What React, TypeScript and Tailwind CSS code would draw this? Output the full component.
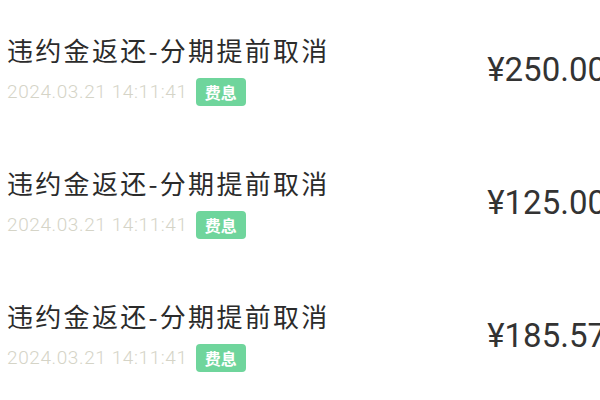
import React from "react"

type Record = {
  title: string
  time: string
  tag: string
  amount: string
}

const records: Record[] = [
  { title: "违约金返还-分期提前取消", time: "2024.03.21 14:11:41", tag: "费息", amount: "¥250.00" },
  { title: "违约金返还-分期提前取消", time: "2024.03.21 14:11:41", tag: "费息", amount: "¥125.00" },
  { title: "违约金返还-分期提前取消", time: "2024.03.21 14:11:41", tag: "费息", amount: "¥185.57" },
]

const Row: React.FC<{ item: Record }> = ({ item }) => {
  return (
    <div className="flex h-[133px] items-center justify-between pl-[7px]">
      <div className="flex flex-col gap-[12px]">
        <div className="text-[26px] leading-[32px] tracking-[2.3px] text-[#2b2b2b] [font-family:'Noto_Sans_CJK_SC',sans-serif]">
          {item.title}
        </div>
        <div className="flex items-center gap-[8px]">
          <span className="text-[19px] leading-[28px] tracking-[0.6px] text-[#d5d4c7] [font-family:Roboto,'Noto_Sans_CJK_SC',sans-serif] font-light">
            {item.time}
          </span>
          <span className="flex h-[28px] w-[50px] items-center justify-center rounded-[4px] bg-[#6fd59c] text-[16px] font-bold text-white [font-family:'Noto_Sans_CJK_SC',sans-serif]">
            {item.tag}
          </span>
        </div>
      </div>
      <div className="text-[33px] leading-none text-[#333333] [font-family:Roboto,'Noto_Sans_CJK_SC',sans-serif]">
        {item.amount}
      </div>
    </div>
  )
}

export default function App() {
  return (
    <div className="h-[400px] w-[600px] overflow-hidden bg-white">
      <div className="w-[606px] pt-[3px]">
        {records.map((r, i) => (
          <Row key={i} item={r} />
        ))}
      </div>
    </div>
  )
}
